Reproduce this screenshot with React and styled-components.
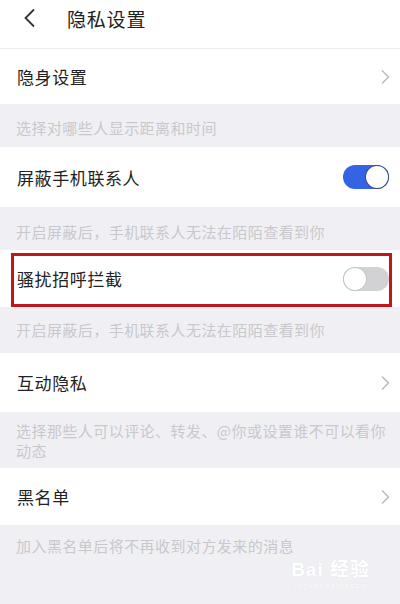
import React from "react";
import styled, { createGlobalStyle } from "styled-components";

const Global = createGlobalStyle`
  html, body { margin: 0; padding: 0; background: #f0f0f4; }
  body { font-family: "Noto Sans CJK SC", "Noto Sans", sans-serif; }
  * { box-sizing: border-box; }
`;

const Page = styled.div`
  width: 400px;
  height: 604px;
  background: #f0f0f4;
  display: flex;
  flex-direction: column;
  overflow: hidden;
  position: relative;
`;

const Header = styled.header`
  height: 49px;
  background: #fff;
  border-bottom: 1px solid #ececef;
  display: flex;
  align-items: center;
  padding: 0 0 12px 23px;
  gap: 30px;
`;

const Title = styled.h1`
  margin: 0;
  font-size: 19px;
  font-weight: 400;
  color: #222;
  letter-spacing: 0.8px;
`;

const Row = styled.div`
  position: relative;
  height: ${(p) => p.$h}px;
  background: #fff;
  display: flex;
  align-items: center;
  justify-content: space-between;
  padding: 0 10px 0 17px;
`;

const Label = styled.span`
  font-size: 17px;
  color: #222;
  letter-spacing: 0.6px;
`;

const Note = styled.div`
  padding: ${(p) => p.$pad};
  padding-left: 16px;
  padding-right: 4px;
  font-size: 15px;
  line-height: 20px;
  color: #c8c8cd;
  letter-spacing: 0.45px;
  flex: ${(p) => (p.$grow ? 1 : "none")};
`;

const Track = styled.div`
  width: 46px;
  height: 24px;
  border-radius: 12px;
  background: ${(p) => (p.$on ? "#3563e6" : "#d2d2d4")};
  display: flex;
  align-items: center;
  justify-content: ${(p) => (p.$on ? "flex-end" : "flex-start")};
  padding: 1px;
  margin-right: 1px;
`;

const Knob = styled.div`
  width: 22px;
  height: 22px;
  border-radius: 50%;
  background: #fff;
  box-shadow: 0 0 0 1px ${(p) => (p.$on ? "#3a4a8a" : "#c4c4c6")};
`;

const Highlight = styled.div`
  position: absolute;
  left: 11px;
  right: 8px;
  top: 3px;
  bottom: 0;
  border: 3px solid #c3161c;
  pointer-events: none;
`;

const Watermark = styled.div`
  position: absolute;
  right: 30px;
  bottom: 14px;
  color: #fff;
  text-align: center;
  font-family: "Liberation Sans", "Noto Sans CJK SC", sans-serif;
  text-shadow: 0 0 1px #d8d8dc;
  line-height: 1;
`;

const WmTop = styled.div`
  font-size: 19px;
  font-weight: 700;
  letter-spacing: 1px;
`;

const WmSub = styled.div`
  font-size: 8px;
  margin-top: 3px;
  letter-spacing: 0.5px;
`;

const Back = () => (
  <svg width="14" height="20" viewBox="0 0 14 20">
    <path d="M11 1.5 L2.5 10 L11 18.5" fill="none" stroke="#333" strokeWidth="1.8" />
  </svg>
);

const Chevron = () => (
  <svg width="10" height="16" viewBox="0 0 10 16">
    <path d="M2 1.5 L8.5 8 L2 14.5" fill="none" stroke="#b9b9bd" strokeWidth="1.4" />
  </svg>
);

const Toggle = ({ on }) => (
  <Track $on={on}>
    <Knob $on={on} />
  </Track>
);

export default function App() {
  return (
    <Page>
      <Global />
      <Header>
        <Back />
        <Title>隐私设置</Title>
      </Header>
      <Row $h={55}>
        <Label>隐身设置</Label>
        <Chevron />
      </Row>
      <Note $pad="14px 0 9px">选择对哪些人显示距离和时间</Note>
      <Row $h={60}>
        <Label>屏蔽手机联系人</Label>
        <Toggle on />
      </Row>
      <Note $pad="15px 0 8px">开启屏蔽后，手机联系人无法在陌陌查看到你</Note>
      <Row $h={57}>
        <Label>骚扰招呼拦截</Label>
        <Toggle on={false} />
        <Highlight />
      </Row>
      <Note $pad="13px 0 13px">开启屏蔽后，手机联系人无法在陌陌查看到你</Note>
      <Row $h={59}>
        <Label>互动隐私</Label>
        <Chevron />
      </Row>
      <Note $pad="9px 0 7px">选择那些人可以评论、转发、@你或设置谁不可以看你动态</Note>
      <Row $h={57}>
        <Label>黑名单</Label>
        <Chevron />
      </Row>
      <Note $pad="11px 0 0" $grow>加入黑名单后将不再收到对方发来的消息</Note>
      <Watermark>
        <WmTop>Bai 经验</WmTop>
        <WmSub>jingyan.baidu.com</WmSub>
      </Watermark>
    </Page>
  );
}
